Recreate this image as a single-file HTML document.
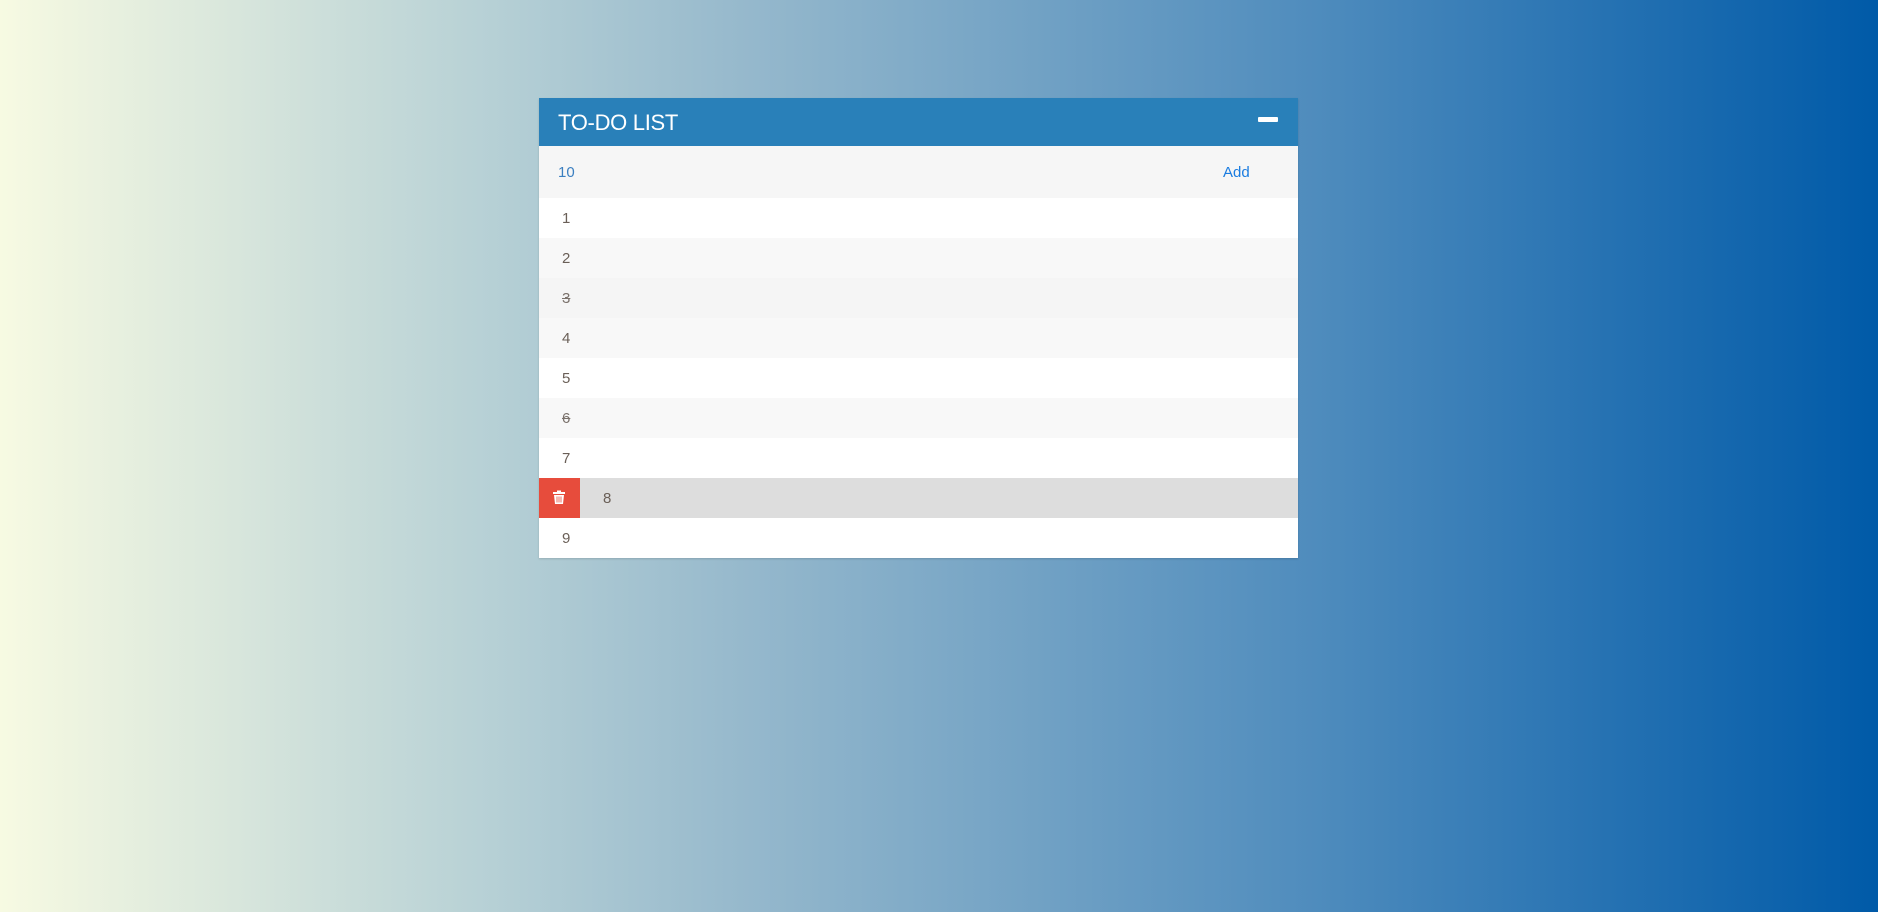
<!DOCTYPE html>
<html><head><meta charset="utf-8"><style>
html,body{margin:0;padding:0;width:1878px;height:912px;overflow:hidden}
body{background:linear-gradient(to right,#f7fae2 0%,#b9d2d6 25%,#95b8cc 40%,#4f8cbd 70%,#005aa8 100%);font-family:"Liberation Sans",sans-serif;position:relative}
.card{position:absolute;left:539px;top:98px;width:759px;background:#fff;box-shadow:0 1px 2px rgba(0,0,0,.15)}
.hd{height:48px;background:#2980b9;color:#fff;font-size:22px;line-height:50px;padding-left:19px;position:relative;letter-spacing:-0.3px}
.hd .min{position:absolute;left:719px;top:19px;width:20px;height:5px;background:#fff;border-radius:1px}
.add{height:52px;background:#f6f6f6;position:relative;font-size:15px;line-height:54px}
.add .v{position:absolute;left:19px;color:#3b7fc0}
.add .b{position:absolute;left:684px;color:#1a7ce0}
.r{height:40px;line-height:42px;font-size:15px;color:#6a5f57;padding-left:23px;position:relative}
.w{background:#fff}.g{background:#f8f8f8}.g2{background:#f5f5f5}
s{text-decoration:line-through;color:#7a716b}
.sel{background:#dddddd;padding-left:64px}
.del{position:absolute;left:0;top:0;width:41px;height:40px;background:#e74c3c}
</style></head><body>
<div class="card">
<div class="hd">TO-DO LIST<div class="min"></div></div>
<div class="add"><span class="v">10</span><span class="b">Add</span></div>
<div class="r w">1</div>
<div class="r g">2</div>
<div class="r g2"><s>3</s></div>
<div class="r g">4</div>
<div class="r w">5</div>
<div class="r g"><s>6</s></div>
<div class="r w">7</div>
<div class="r sel"><div class="del"><svg width="41" height="40" viewBox="0 0 41 40"><rect x="14" y="14" width="12" height="2" fill="#fff"/><rect x="18" y="12.5" width="4" height="2" fill="#fff"/><path d="M15 17h10l-1 9h-8z" fill="#fff"/><path d="M18 18.5v6M20 18.5v6M22 18.5v6" stroke="#e74c3c" stroke-width=".8"/></svg></div>8</div>
<div class="r w">9</div>
</div>
</body></html>
